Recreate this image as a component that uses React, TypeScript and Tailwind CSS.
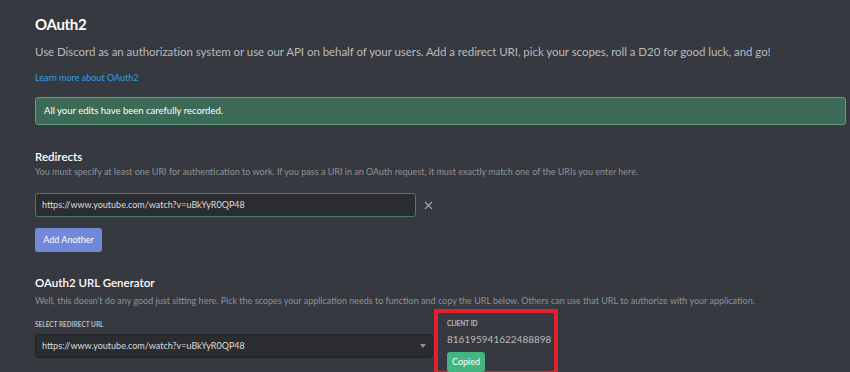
const redirect = 'https://www.youtube.com/watch?v=uBkYyR0QP48';

const App = () => (
  <div className="h-[372px] w-[850px] overflow-hidden bg-[#36393f] pl-[35px] pr-[4px] font-['Lato',sans-serif] text-[#b9bbbe]">
    {/* Header */}
    <h1 className="pt-[14px] text-[15px] font-bold leading-[20px] tracking-[-0.3px] text-white">OAuth2</h1>
    <p className="mt-[10px] text-[11.5px] leading-[16px] tracking-[-0.05px] text-[#b9bbbe]">
      Use Discord as an authorization system or use our API on behalf of your users. Add a redirect URI, pick your
      scopes, roll a D20 for good luck, and go!
    </p>
    <a className="mt-[12px] block text-[9px] leading-[12px] text-[#2fa0e2]">Learn more about OAuth2</a>

    <div className="mt-[13px] flex h-[28px] items-center rounded-[3px] border border-[#5c9e80] bg-[#3d6a56] px-[8px] text-[9.5px] text-white">
      All your edits have been carefully recorded.
    </div>

    {/* Redirects */}
    <h2 className="mt-[24px] text-[11.5px] font-semibold leading-[16px] text-white">Redirects</h2>
    <p className="mt-[1px] text-[9px] leading-[12px] text-[#8e9297]">
      You must specify at least one URI for authentication to work. If you pass a URI in an OAuth request, it must
      exactly match one of the URIs you enter here.
    </p>
    <div className="mt-[15px] flex items-center gap-[8px]">
      <div className="flex h-[24px] w-[381px] items-center rounded-[3px] border border-[#4b7c68] bg-[#2a2c30] px-[6px] text-[9px] text-[#dcddde]">
        {redirect}
      </div>
      <svg width="9" height="9" viewBox="0 0 9 9" className="text-[#a3a6aa]">
        <path d="M1 1 L8 8 M8 1 L1 8" stroke="currentColor" strokeWidth="1.1" />
      </svg>
    </div>
    <button className="mt-[11px] flex h-[24px] w-[67px] items-center justify-center rounded-[3px] bg-[#7289da] text-[9px] text-white">
      Add Another
    </button>

    {/* URL generator */}
    <h2 className="mt-[23px] text-[11.5px] font-semibold leading-[16px] text-white">OAuth2 URL Generator</h2>
    <p className="mt-[4px] text-[9px] leading-[12px] text-[#8e9297]">
      Well, this doesn't do any good just sitting here. Pick the scopes your application needs to function and copy
      the URL below. Others can use that URL to authorize with your application.
    </p>
    <div className="mt-[2px] flex items-start">
      <div className="w-[399px] pt-[11px]">
        <div className="text-[6.5px] font-bold uppercase leading-[9px] text-[#b9bbbe]">Select Redirect URL</div>
        <div className="mt-[5px] flex h-[24px] w-[398px] items-center justify-between rounded-[3px] border border-[#202225] bg-[#2a2c30] px-[6px] text-[9px] text-[#dcddde]">
          <span>{redirect}</span>
          <svg width="6" height="4" viewBox="0 0 6 4" className="text-[#8e9297]">
            <path d="M0 0 L6 0 L3 4 Z" fill="currentColor" />
          </svg>
        </div>
      </div>
      <div className="h-[66px] w-[124px] border-[4px] border-[#e2202e] pl-[9px] pt-[6px]">
        <div className="text-[6.5px] font-bold uppercase leading-[9px] text-[#b9bbbe]">Client ID</div>
        <div className="mt-[5px] text-[10px] leading-[13px] text-[#b9bbbe]">816195941622488898</div>
        <button className="mt-[6px] flex h-[20px] w-[38px] items-center justify-center rounded-[3px] bg-[#43b581] text-[9px] text-white">
          Copied
        </button>
      </div>
    </div>
  </div>
);

export default App;
